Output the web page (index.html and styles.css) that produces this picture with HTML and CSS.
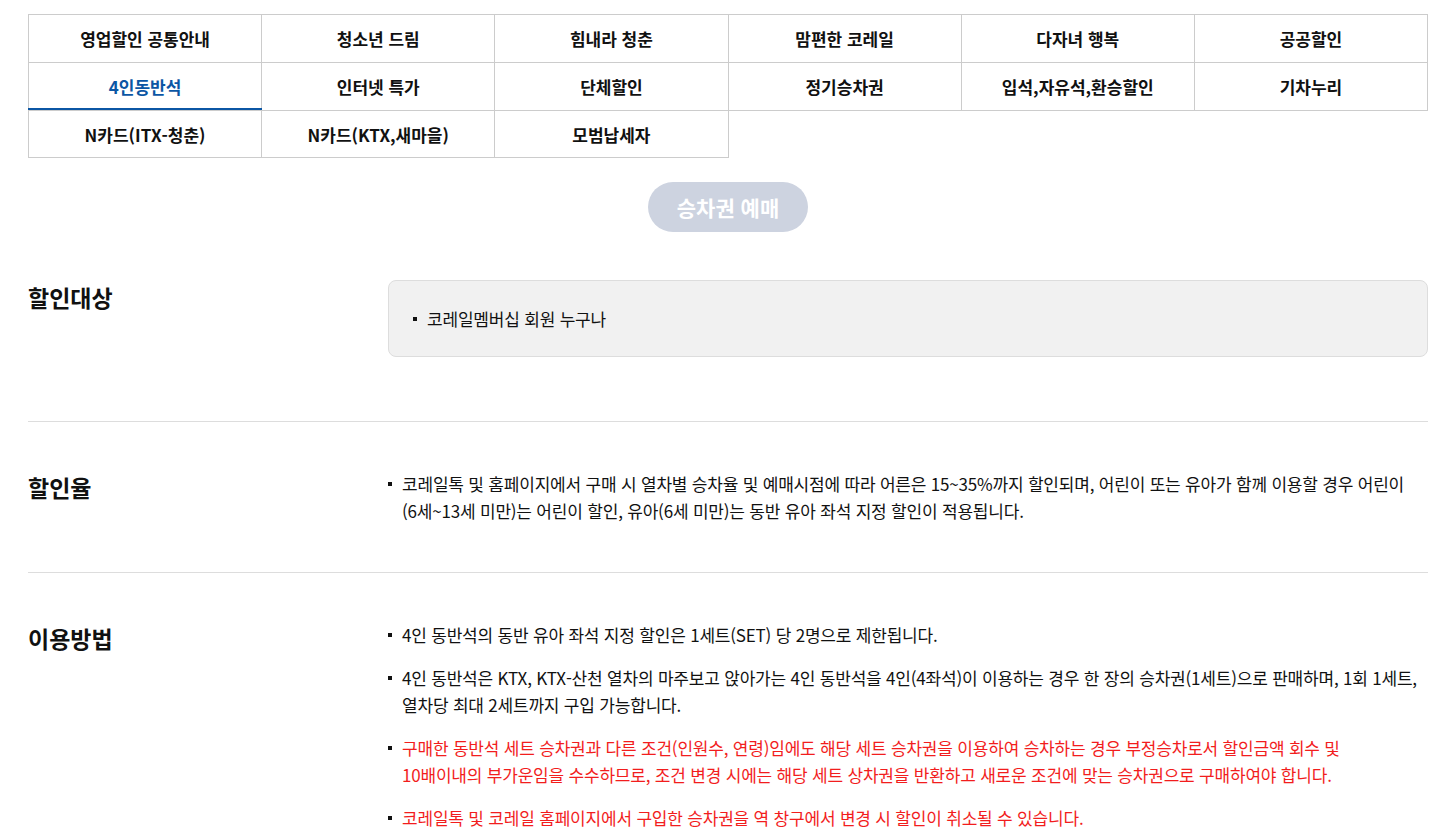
FILE: index.html
```html
<!DOCTYPE html>
<html lang="ko">
<head>
    <meta charset="UTF-8">
    <meta name="viewport" content="width=device-width, initial-scale=1.0">
    <title>4인동반석 - 영업할인</title>
    <link rel="stylesheet" href="styles.css">
</head>
<body>
    <div class="container">
        <!-- 할인 탭 메뉴 -->
        <ul class="tabs">
            <li><a href="#">영업할인 공통안내</a></li>
            <li><a href="#">청소년 드림</a></li>
            <li><a href="#">힘내라 청춘</a></li>
            <li><a href="#">맘편한 코레일</a></li>
            <li><a href="#">다자녀 행복</a></li>
            <li><a href="#">공공할인</a></li>
            <li class="active"><a href="#">4인동반석</a></li>
            <li><a href="#">인터넷 특가</a></li>
            <li><a href="#">단체할인</a></li>
            <li><a href="#">정기승차권</a></li>
            <li><a href="#">입석,자유석,환승할인</a></li>
            <li><a href="#">기차누리</a></li>
            <li><a href="#">N카드(ITX-청춘)</a></li>
            <li><a href="#">N카드(KTX,새마을)</a></li>
            <li><a href="#">모범납세자</a></li>
        </ul>

        <div class="btn-wrap">
            <button type="button" class="btn-reserve" disabled>승차권 예매</button>
        </div>

        <div class="section section-first">
            <h3 class="section-title">할인대상</h3>
            <div class="section-body">
                <div class="info-box">
                    <ul class="dot-list">
                        <li>코레일멤버십 회원 누구나</li>
                    </ul>
                </div>
            </div>
        </div>

        <div class="section">
            <h3 class="section-title">할인율</h3>
            <div class="section-body">
                <ul class="dot-list">
                    <li>코레일톡 및 홈페이지에서 구매 시 열차별 승차율 및 예매시점에 따라 어른은 15~35%까지 할인되며, 어린이 또는 유아가 함께 이용할 경우 어린이<br>(6세~13세 미만)는 어린이 할인, 유아(6세 미만)는 동반 유아 좌석 지정 할인이 적용됩니다.</li>
                </ul>
            </div>
        </div>

        <div class="section">
            <h3 class="section-title">이용방법</h3>
            <div class="section-body">
                <ul class="dot-list">
                    <li>4인 동반석의 동반 유아 좌석 지정 할인은 1세트(SET) 당 2명으로 제한됩니다.</li>
                    <li>4인 동반석은 KTX, KTX-산천 열차의 마주보고 앉아가는 4인 동반석을 4인(4좌석)이 이용하는 경우 한 장의 승차권(1세트)으로 판매하며, 1회 1세트,<br>열차당 최대 2세트까지 구입 가능합니다.</li>
                    <li class="red">구매한 동반석 세트 승차권과 다른 조건(인원수, 연령)임에도 해당 세트 승차권을 이용하여 승차하는 경우 부정승차로서 할인금액 회수 및<br>10배이내의 부가운임을 수수하므로, 조건 변경 시에는 해당 세트 상차권을 반환하고 새로운 조건에 맞는 승차권으로 구매하여야 합니다.</li>
                    <li class="red">코레일톡 및 코레일 홈페이지에서 구입한 승차권을 역 창구에서 변경 시 할인이 취소될 수 있습니다.</li>
                </ul>
            </div>
        </div>
    </div>
</body>
</html>
```

FILE: styles.css
```css
* {
    box-sizing: border-box;
}
body {
    margin: 0;
    font-family: "Noto Sans CJK KR", "Noto Sans", sans-serif;
    color: #111;
    background-color: #fff;
}
ul {
    list-style: none;
    margin: 0;
    padding: 0;
}
.container {
    width: 1400px;
    margin: 0 auto;
    padding-top: 14px;
}

/* tabs */
.tabs {
    display: grid;
    grid-template-columns: repeat(6, 1fr);
    border-top: 1px solid #ccc;
    border-left: 1px solid #ccc;
}
.tabs li {
    position: relative;
    height: 48px;
    border-right: 1px solid #ccc;
    border-bottom: 1px solid #ccc;
}
.tabs li:nth-child(n+13) {
    height: 47px;
}
.tabs a {
    display: flex;
    align-items: center;
    justify-content: center;
    height: 100%;
    font-size: 17px;
    font-weight: 700;
    color: #111;
    text-decoration: none;
}
.tabs li.active a {
    color: #0b56a4;
}
.tabs li.active::after {
    content: "";
    position: absolute;
    left: -1px;
    right: -1px;
    bottom: 0;
    height: 2px;
    background-color: #0b56a4;
}

/* button */
.btn-wrap {
    display: flex;
    justify-content: center;
    margin-top: 24px;
}
.btn-reserve {
    width: 160px;
    height: 50px;
    border: none;
    border-radius: 25px;
    background-color: #cdd3e0;
    color: #fff;
    font-family: inherit;
    font-size: 21px;
    font-weight: 700;
}

/* sections */
.section {
    display: flex;
    padding: 48px 0;
    border-bottom: 1px solid #ddd;
}
.section:last-child {
    border-bottom: none;
}
.section-first {
    padding-bottom: 64px;
}
.section-title {
    flex: 0 0 360px;
    margin: 0;
    font-size: 23px;
    line-height: 34px;
    font-weight: 700;
}
.section-body {
    flex: 1;
}
.info-box {
    padding: 24px;
    background-color: #f1f1f1;
    border: 1px solid #ddd;
    border-radius: 8px;
}
.dot-list li {
    position: relative;
    padding-left: 14px;
    font-size: 17px;
    line-height: 27px;
    letter-spacing: -0.2px;
    word-break: keep-all;
    margin-bottom: 16px;
}
.dot-list li:last-child {
    margin-bottom: 0;
}
.dot-list li::before {
    content: "";
    position: absolute;
    left: 0;
    top: 12px;
    width: 4px;
    height: 4px;
    background-color: #111;
}
.dot-list li.red {
    color: #f21d1d;
}
```
